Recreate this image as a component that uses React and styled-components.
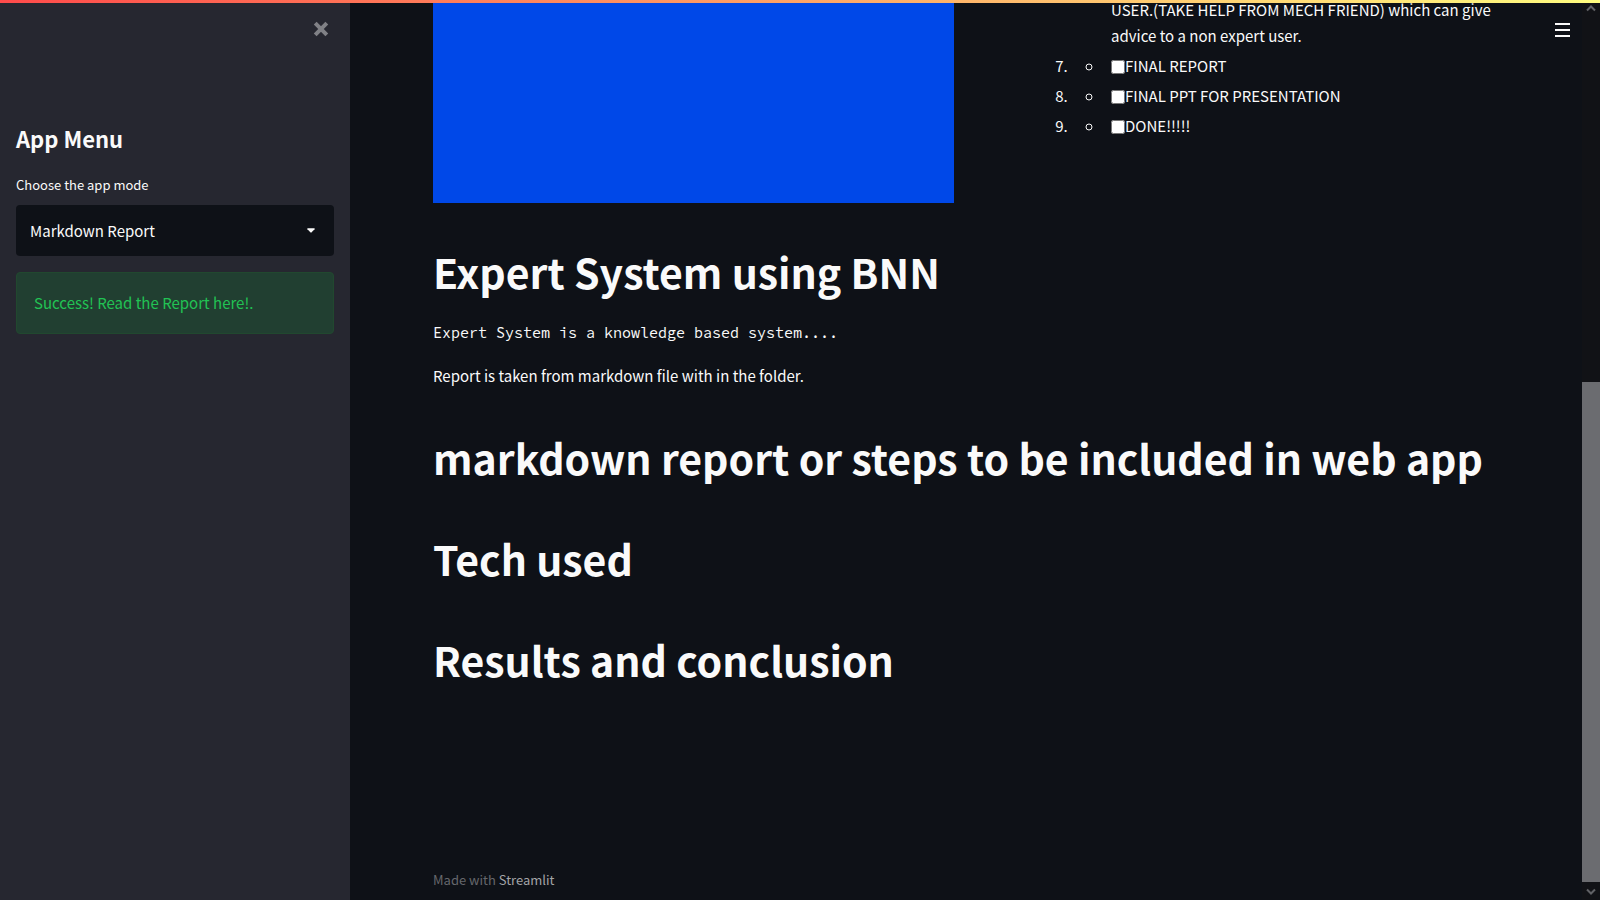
import React from "react";
import styled, { createGlobalStyle } from "styled-components";

const sans = `"Source Sans Pro", "Noto Sans CJK SC", "Noto Sans", sans-serif`;
const mono = `"Source Code Pro", "Noto Sans Mono CJK SC", "DejaVu Sans Mono", monospace`;

const GlobalStyle = createGlobalStyle`
  * { box-sizing: border-box; }
  body {
    margin: 0;
    background: #0e1117;
    color: #fafafa;
    font-family: ${sans};
    font-size: 15px;
    line-height: 26px;
  }
`;

const Shell = styled.div`
  position: relative;
  display: flex;
  height: 100vh;
  overflow: hidden;
`;

const Decoration = styled.div`
  position: absolute;
  inset: 0 0 auto 0;
  height: 3px;
  background: linear-gradient(90deg, #ff4b4b, #fffd80);
  z-index: 2;
`;

const Sidebar = styled.aside`
  flex: 0 0 350px;
  display: flex;
  flex-direction: column;
  padding: 16px;
  background: #262730;
`;

const SidebarHeader = styled.div`
  display: flex;
  justify-content: flex-end;
  height: 105px;
`;

const IconButton = styled.button`
  display: flex;
  align-items: center;
  justify-content: center;
  width: 26px;
  height: 26px;
  padding: 0;
  border: 0;
  background: none;
  color: ${(p) => p.$color};
  cursor: pointer;
`;

const SidebarTitle = styled.h2`
  margin: 0 0 18px;
  font-size: 22px;
  font-weight: 700;
  line-height: 34px;
`;

const FieldLabel = styled.label`
  margin-bottom: 9px;
  font-size: 13px;
  line-height: 23px;
`;

const SelectBox = styled.div`
  position: relative;
  display: flex;
  margin-bottom: 16px;
`;

const Select = styled.select`
  appearance: none;
  width: 100%;
  height: 51px;
  padding: 0 40px 0 14px;
  border: 0;
  border-radius: 4px;
  background: #0e1117;
  color: #fafafa;
  font-family: ${sans};
  font-size: 15px;
`;

const Caret = styled.svg`
  position: absolute;
  right: 19px;
  top: 23px;
  pointer-events: none;
`;

const Alert = styled.div`
  padding: 17px;
  border: 1px solid #21482f;
  border-radius: 4px;
  background: #213f31;
  color: #21c354;
`;

const Main = styled.main`
  flex: 1;
  min-width: 0;
  display: flex;
  flex-direction: column;
  padding: 0 83px 7px;
`;

const Columns = styled.div`
  display: grid;
  grid-template-columns: 1fr 1fr;
  gap: 24px;
`;

const Picture = styled.div`
  height: 203px;
  background: #0048e8;
`;

const Steps = styled.ol`
  margin: -3px 0 0;
  padding: 0 0 0 93px;
`;

const Step = styled.li`
  margin-bottom: 4px;
  list-style-type: ${(p) => (p.$continued ? "none" : "decimal")};
`;

const Tasks = styled.ul`
  margin: 0;
  padding: 0 0 0 33px;
  list-style-type: ${(p) => (p.$continued ? "none" : "circle")};
`;

const TaskItem = styled.li`
  padding-left: 7px;
`;

const Checkbox = styled.input`
  width: 14px;
  height: 14px;
  margin: 0;
  vertical-align: -2px;
`;

const Heading = styled.h1`
  margin: 40px 0 5px;
  font-size: 41px;
  font-weight: 700;
  line-height: 56px;
`;

const Code = styled.pre`
  margin: 16px 0 17px;
  font-family: ${mono};
  font-size: 15px;
  line-height: 26px;
`;

const Paragraph = styled.p`
  margin: 0;
`;

const Footer = styled.footer`
  margin-top: auto;
  color: #65676c;
  font-size: 13px;
`;

const FooterLink = styled.a`
  color: #a3a4a7;
  text-decoration: none;
`;

const MenuCorner = styled.div`
  position: absolute;
  top: 17px;
  right: 25px;
`;

const Scrollbar = styled.div`
  flex: 0 0 18px;
  display: flex;
  flex-direction: column;
  align-items: center;
  justify-content: space-between;
  padding: 4px 0;
  background: #111216;
`;

const Thumb = styled.div`
  width: 100%;
  height: 56%;
  margin: auto 0 6px;
  background: #6b6c70;
`;

const tasks = ["FINAL REPORT", "FINAL PPT FOR PRESENTATION", "DONE!!!!!"];

function Chevron({ up }) {
  return (
    <svg width="10" height="8" viewBox="0 0 10 8" fill="none" stroke="#606165" strokeWidth="2">
      <path d={up ? "M1 6.5 5 2.5 9 6.5" : "M1 1.5 5 5.5 9 1.5"} />
    </svg>
  );
}

export default function App() {
  return (
    <Shell>
      <GlobalStyle />
      <Decoration />
      <Sidebar>
        <SidebarHeader>
          <IconButton type="button" aria-label="Close sidebar" $color="#808186">
            <svg width="16" height="16" viewBox="0 0 16 16" stroke="currentColor" strokeWidth="4">
              <path d="M2.2 2.2 13.8 13.8M13.8 2.2 2.2 13.8" />
            </svg>
          </IconButton>
        </SidebarHeader>
        <SidebarTitle>App Menu</SidebarTitle>
        <FieldLabel htmlFor="mode">Choose the app mode</FieldLabel>
        <SelectBox>
          <Select id="mode" defaultValue="Markdown Report">
            <option>Markdown Report</option>
          </Select>
          <Caret width="8" height="5" viewBox="0 0 9 5" fill="#fafafa">
            <path d="M.8 0H8.2Q9 .3 8.5 1L5.2 4.6Q4.5 5.2 3.8 4.6L.5 1Q0 .3.8 0Z" />
          </Caret>
        </SelectBox>
        <Alert role="status">Success! Read the Report here!.</Alert>
      </Sidebar>
      <Main>
        <Columns>
          <Picture />
          <Steps start={6}>
            <Step $continued>
              <Tasks $continued>
                <TaskItem>
                  USER.(TAKE HELP FROM MECH FRIEND) which can give advice to a non expert user.
                </TaskItem>
              </Tasks>
            </Step>
            {tasks.map((task) => (
              <Step key={task}>
                <Tasks>
                  <TaskItem>
                    <label>
                      <Checkbox type="checkbox" />
                      {task}
                    </label>
                  </TaskItem>
                </Tasks>
              </Step>
            ))}
          </Steps>
        </Columns>
        <Heading>Expert System using BNN</Heading>
        <Code>Expert System is a knowledge based system....</Code>
        <Paragraph>Report is taken from markdown file with in the folder.</Paragraph>
        <Heading>markdown report or steps to be included in web app</Heading>
        <Heading>Tech used</Heading>
        <Heading>Results and conclusion</Heading>
        <Footer>
          Made with <FooterLink href="#streamlit">Streamlit</FooterLink>
        </Footer>
      </Main>
      <MenuCorner>
        <IconButton type="button" aria-label="Open menu" $color="#fafafa">
          <svg width="15" height="14" viewBox="0 0 15 14" fill="currentColor">
            <path d="M0 0H15V2H0ZM0 6H15V8H0ZM0 12H15V14H0Z" />
          </svg>
        </IconButton>
      </MenuCorner>
      <Scrollbar aria-hidden="true">
        <Chevron up />
        <Thumb />
        <Chevron />
      </Scrollbar>
    </Shell>
  );
}
